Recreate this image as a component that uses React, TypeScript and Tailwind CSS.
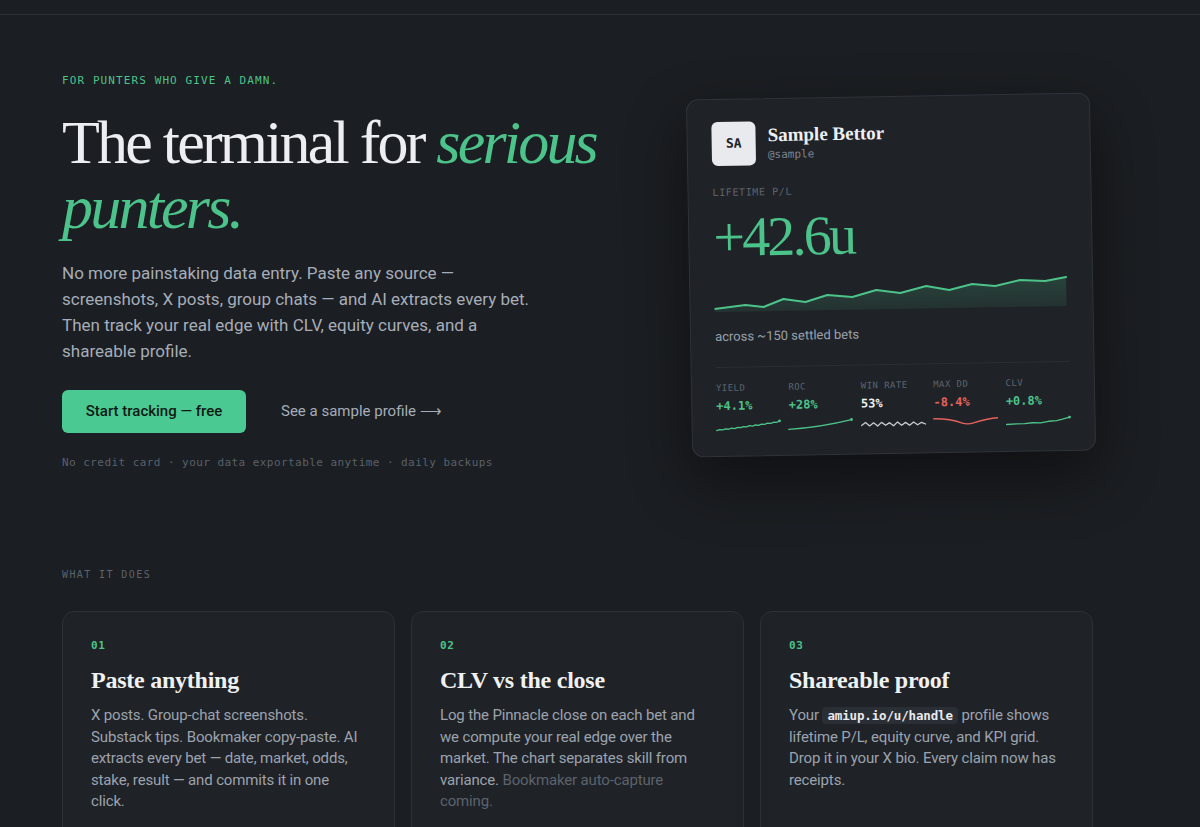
import React from "react";

const chartPts: [number, number][] = [
  [0, 35.9], [31, 32.5], [49, 34.8], [69, 27.1], [91, 30.5], [113, 23.9], [138, 26.3],
  [162, 19.8], [186, 23.2], [212, 16.6], [235, 21], [258, 15.4], [281, 17.8],
  [306, 12.3], [331, 13.7], [352, 10.1],
];

function EquityChart() {
  const line = chartPts.map((p, i) => `${i === 0 ? "M" : "L"}${p[0]} ${p[1]}`).join(" ");
  const area = `${line} L352 39 L0 39 Z`;
  return (
    <svg width="354" height="40" viewBox="0 0 354 40" className="block">
      <defs>
        <linearGradient id="eqfill" x1="0" y1="0" x2="0" y2="1">
          <stop offset="0%" stopColor="#4cc38a" stopOpacity="0.2" />
          <stop offset="100%" stopColor="#4cc38a" stopOpacity="0.1" />
        </linearGradient>
      </defs>
      <path d={area} fill="url(#eqfill)" />
      <path d={line} fill="none" stroke="#4cc38a" strokeWidth="2" strokeLinejoin="round" strokeLinecap="round" />
    </svg>
  );
}

function Spark({ kind }: { kind: "yield" | "roc" | "win" | "dd" | "clv" }) {
  let d = "";
  let color = "#4cc38a";
  let dot: [number, number] | null = null;
  if (kind === "yield") {
    d = "M0 10.5 L3 9.6 L6 10 L9 9 L12 9.4 L15 8.4 L18 8.8 L21 7.6 L24 8 L27 7 L30 7.4 L33 6.2 L36 6.6 L39 5.6 L42 6 L45 4.8 L48 5.1 L51 4 L54 4.3 L57 3.2 L60 3.4 L63 2";
    dot = [63, 2];
  } else if (kind === "roc") {
    d = "M0 10.5 C 20 9.5, 40 7, 63 1.8";
    dot = [63, 1.8];
  } else if (kind === "win") {
    color = "#c9cdd3";
    d = "M0 8 L4 5 L8 8.5 L12 5.5 L16 8.8 L20 5.2 L24 8.2 L28 5.6 L32 8.8 L36 5 L40 8.4 L44 5.6 L48 8.6 L52 5.4 L56 8.2 L60 5.8 L64 7.6";
  } else if (kind === "dd") {
    color = "#e5625c";
    d = "M0 2.5 C 12 2.5, 20 4, 28 7 C 32 8.5, 36 8.5, 40 7.2 C 48 5, 56 3, 64 2.6";
  } else {
    d = "M0 9.5 L10 9.1 L18 8.9 L26 8.2 L34 8.5 L42 7 L50 6.4 L56 5.2 L63 3.2";
    dot = [63, 3.2];
  }
  return (
    <svg width="64" height="12" viewBox="0 0 64 12" className="block overflow-visible">
      <path d={d} fill="none" stroke={color} strokeWidth="1.3" strokeLinejoin="round" strokeLinecap="round" />
      {dot && <circle cx={dot[0]} cy={dot[1]} r="1.4" fill={color} />}
    </svg>
  );
}

const kpis: { label: string; value: string; color: string; kind: "yield" | "roc" | "win" | "dd" | "clv" }[] = [
  { label: "YIELD", value: "+4.1%", color: "text-[#4cc38a]", kind: "yield" },
  { label: "ROC", value: "+28%", color: "text-[#4cc38a]", kind: "roc" },
  { label: "WIN RATE", value: "53%", color: "text-[#eef0f3]", kind: "win" },
  { label: "MAX DD", value: "-8.4%", color: "text-[#e5625c]", kind: "dd" },
  { label: "CLV", value: "+0.8%", color: "text-[#4cc38a]", kind: "clv" },
];

function HeroCard() {
  return (
    <div className="mt-[23px] w-[404px] shrink-0 -rotate-1 rounded-xl border border-[#2f333a] bg-[#1f2227] px-6 pt-[22px] pb-6 shadow-[0_24px_60px_rgba(0,0,0,0.45)]">
      <div className="flex items-center gap-3">
        <div className="flex h-[44px] w-[44px] items-center justify-center rounded-md bg-[#e8eaed] font-['DejaVu_Sans_Mono',monospace] text-[13px] font-semibold text-[#1f2227]">
          SA
        </div>
        <div className="flex flex-col">
          <div className="font-['Liberation_Serif',serif] text-[19px] font-bold leading-[24px] text-[#eef0f3]">
            Sample Bettor
          </div>
          <div className="font-['DejaVu_Sans_Mono',monospace] text-[11px] leading-[16px] text-[#7d848e]">@sample</div>
        </div>
      </div>
      <div className="mt-[20px] font-['DejaVu_Sans_Mono',monospace] text-[10px] leading-[14px] tracking-[0.06em] text-[#5d646e]">
        LIFETIME P/L
      </div>
      <div className="mt-[7px] font-['Liberation_Serif',serif] text-[56px] leading-[60px] tracking-[-0.05em] text-[#4cc38a]">
        +42.6u
      </div>
      <div className="mt-[6px]">
        <EquityChart />
      </div>
      <div className="mt-[14px] font-['Roboto',sans-serif] text-[13px] leading-[20px] text-[#9aa1ab]">
        across ~150 settled bets
      </div>
      <div className="mt-[20px] border-t border-[#2a2e35] pt-[14px]">
        <div className="grid grid-cols-5 gap-2">
          {kpis.map((k) => (
            <div key={k.label} className="flex flex-col">
              <div className="font-['DejaVu_Sans_Mono',monospace] text-[9px] leading-[12px] tracking-[0.05em] text-[#5d646e]">
                {k.label}
              </div>
              <div className={`mt-[4px] font-['DejaVu_Sans_Mono',monospace] text-[12px] font-bold leading-[16px] ${k.color}`}>
                {k.value}
              </div>
              <div className="mt-[6px]">
                <Spark kind={k.kind} />
              </div>
            </div>
          ))}
        </div>
      </div>
    </div>
  );
}

function FeatureCard({ num, title, children }: { num: string; title: string; children: React.ReactNode }) {
  return (
    <div className="rounded-xl border border-[#2c3037] bg-[#1f2227] px-7 pt-[26px] pb-8">
      <div className="font-['DejaVu_Sans_Mono',monospace] text-[11px] font-bold leading-[16px] tracking-[0.05em] text-[#4cc38a]">
        {num}
      </div>
      <div className="mt-[11px] font-['Liberation_Serif',serif] text-[24px] font-bold leading-[30px] tracking-[-0.01em] text-[#f0f1f3]">
        {title}
      </div>
      <div className="mt-[10px] whitespace-nowrap font-['Roboto',sans-serif] text-[15px] leading-[21.5px] tracking-[-0.01em] text-[#9ca3ae]">
        {children}
      </div>
    </div>
  );
}

export default function App() {
  return (
    <div className="min-h-screen bg-[#1b1e22] font-['Roboto',sans-serif] text-[#eceef2]">
      <div className="h-[15px] border-b border-[#2d3137] bg-[#1b1e22]" />
      <main className="ml-[62px] w-[1031px]">
        <section className="flex items-start justify-between pt-[58px]">
          <div className="flex flex-col">
            <div className="font-['DejaVu_Sans_Mono',monospace] text-[11px] leading-[16px] tracking-[0.1em] text-[#4cc38a]">
              FOR PUNTERS WHO GIVE A DAMN.
            </div>
            <h1 className="mt-[21px] font-['Liberation_Serif',serif] text-[62px] font-normal leading-[65px] tracking-[-0.045em] text-[#eceef2]">
              The terminal for <em className="italic text-[#4cc38a]">serious</em>
              <br />
              <em className="italic text-[#4cc38a]">punters.</em>
            </h1>
            <p className="mt-[20px] w-[540px] font-['Roboto',sans-serif] text-[17px] leading-[26px] text-[#a6adb8]">
              No more painstaking data entry. Paste any source —<br />
              screenshots, X posts, group chats — and AI extracts every bet.<br />
              Then track your real edge with CLV, equity curves, and a<br />
              shareable profile.
            </p>
            <div className="mt-[26px] flex items-center">
              <button className="flex h-[43px] w-[184px] items-center justify-center rounded-md bg-[#4ac993] font-['Roboto',sans-serif] text-[15px] font-medium text-[#0f1a14]">
                Start tracking — free
              </button>
              <a className="ml-[35px] font-['Roboto',sans-serif] text-[15px] text-[#a6adb8]">See a sample profile ⟶</a>
            </div>
            <div className="mt-[22px] font-['DejaVu_Sans_Mono',monospace] text-[11px] leading-[16px] tracking-[0.04em] text-[#5a616b]">
              No credit card · your data exportable anytime · daily backups
            </div>
          </div>
          <HeroCard />
        </section>

        <section className="mt-[96px]">
          <div className="font-['DejaVu_Sans_Mono',monospace] text-[10px] leading-[16px] tracking-[0.14em] text-[#5d646e]">
            WHAT IT DOES
          </div>
          <div className="mt-[28px] grid grid-cols-3 gap-4">
            <FeatureCard num="01" title="Paste anything">
              X posts. Group-chat screenshots.
              <br />
              Substack tips. Bookmaker copy-paste. AI
              <br />
              extracts every bet — date, market, odds,
              <br />
              stake, result — and commits it in one
              <br />
              click.
            </FeatureCard>
            <FeatureCard num="02" title="CLV vs the close">
              Log the Pinnacle close on each bet and
              <br />
              we compute your real edge over the
              <br />
              market. The chart separates skill from
              <br />
              variance. <span className="text-[#5c636d]">Bookmaker auto-capture</span>
              <br />
              <span className="text-[#5c636d]">coming.</span>
            </FeatureCard>
            <FeatureCard num="03" title="Shareable proof">
              Your{" "}
              <code className="rounded bg-[#2a2e35] px-[5px] py-[1px] font-['DejaVu_Sans_Mono',monospace] text-[12.5px] font-semibold text-[#e8eaed]">
                amiup.io/u/handle
              </code>{" "}
              profile shows
              <br />
              lifetime P/L, equity curve, and KPI grid.
              <br />
              Drop it in your X bio. Every claim now has
              <br />
              receipts.
            </FeatureCard>
          </div>
        </section>
      </main>
    </div>
  );
}
